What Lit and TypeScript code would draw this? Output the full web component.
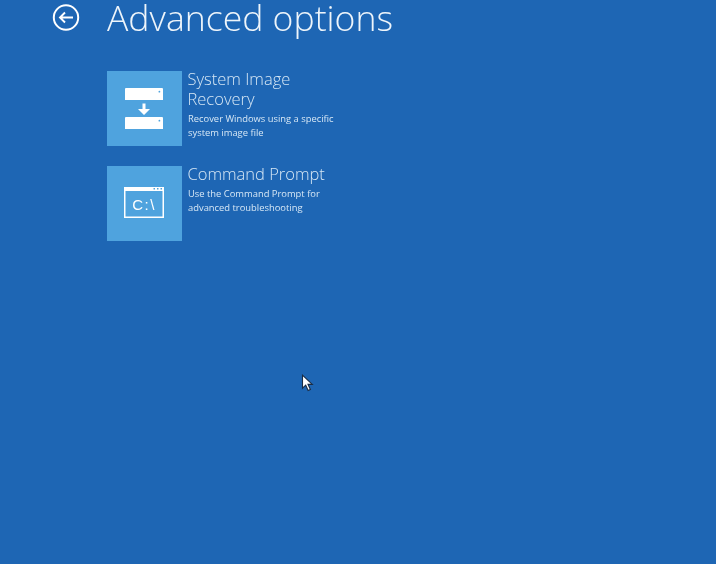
import { LitElement, html, css, svg } from "lit";
import { customElement } from "lit/decorators.js";

const stackIcon = svg`<svg class="icon" width="75" height="75" viewBox="0 0 75 75">
  <path fill="#fff" fill-rule="evenodd" d="M19 17h36a1 1 0 0 1 1 1v11h-38v-11a1 1 0 0 1 1-1zM51.500 20.700a0.900 0.900 0 1 0 1.800 0a0.900 0.900 0 1 0-1.800 0z"/>
  <path fill="#fff" fill-rule="evenodd" d="M19 46h36a1 1 0 0 1 1 1v11h-38v-11a1 1 0 0 1 1-1zM51.500 49.700a0.900 0.900 0 1 0 1.800 0a0.900 0.900 0 1 0-1.800 0z"/>
  <path fill="#fff" d="M35.500 32.500h3v5.500h4.500l-6 6l-6-6h4.500z"/>
</svg>`;

const cmdIcon = svg`<svg class="icon" width="75" height="75" viewBox="0 0 75 75">
  <path fill="none" stroke="#fff" stroke-width="1.500" d="M17.750 21.750h38.500v29.500h-38.500z"/>
  <path fill="#fff" d="M17 21h40v4h-40z"/>
  <path fill="#4fa3de" d="M46.500 22h1.500v1.500h-1.500zM50 22h1.500v1.500h-1.500zM53.500 22h1.500v1.500h-1.500z"/>
  <text class="prompt" x="37" y="43.500" text-anchor="middle">C:\\</text>
</svg>`;

@customElement("app-root")
export class AppRoot extends LitElement {
  static styles = css`
    :host {
      display: block;
      position: relative;
      width: 716px;
      height: 564px;
      overflow: hidden;
      background: #1e66b4;
      color: #fff;
      font-family: "Open Sans", "Noto Sans", sans-serif;
    }
    .page {
      display: flex;
      flex-direction: column;
      filter: blur(0.4px);
    }
    .header {
      display: flex;
      align-items: flex-start;
      padding-left: 52px;
      height: 71px;
    }
    .back {
      display: block;
      width: 28px;
      height: 28px;
      margin-top: 4px;
      margin-right: 27px;
    }
    h1 {
      margin: -1px 0 0 0;
      font-size: 35.600px;
      line-height: 37px;
      font-weight: 300;
      color: #eef5fb;
    }
    .list {
      display: flex;
      flex-direction: column;
      gap: 20px;
      padding-left: 107px;
    }
    .item {
      display: flex;
      gap: 6px;
      height: 75px;
    }
    .tile {
      flex: none;
      width: 75px;
      height: 75px;
      background: #4fa3de;
    }
    .icon {
      display: block;
    }
    .prompt {
      font-family: "Liberation Sans", sans-serif;
      font-size: 15px;
      letter-spacing: 1.500px;
      fill: #fff;
    }
    .text {
      width: 165px;
    }
    .title {
      font-size: 16.500px;
      line-height: 20px;
      font-weight: 300;
      color: #d6e7f5;
      margin-top: -2px;
      margin-left: -0.5px;
    }
    .desc {
      font-size: 9.400px;
      line-height: 14px;
      font-weight: 400;
      color: #d6e7f5;
      margin-top: 3px;
    }
    .cursor {
      position: absolute;
      left: 301px;
      top: 374px;
      display: block;
    }
  `;

  render() {
    return html`
      <div class="page">
        <div class="header">
          <svg class="back" viewBox="0 0 28 28">
            <circle cx="14" cy="13.500" r="12.200" fill="none" stroke="#fff" stroke-width="2"></circle>
            <path fill="none" stroke="#fff" stroke-width="1.900" d="M21 13.500h-13M13 8.500l-5 5l5 5"></path>
          </svg>
          <h1>Advanced options</h1>
        </div>
        <div class="list">
          <div class="item">
            <div class="tile">${stackIcon}</div>
            <div class="text">
              <div class="title">System Image Recovery</div>
              <div class="desc">Recover Windows using a specific system image file</div>
            </div>
          </div>
          <div class="item">
            <div class="tile">${cmdIcon}</div>
            <div class="text">
              <div class="title">Command Prompt</div>
              <div class="desc">Use the Command Prompt for advanced troubleshooting</div>
            </div>
          </div>
        </div>
      </div>
      <svg class="cursor" width="14" height="18" viewBox="0 0 14 18">
        <path fill="#fff" stroke="#1a2c44" stroke-width="1.100" d="M1.500 1.200v13l3.200-3l2.400 5.300l2.300-1l-2.400-5.100h4.300z"></path>
      </svg>
    `;
  }
}
